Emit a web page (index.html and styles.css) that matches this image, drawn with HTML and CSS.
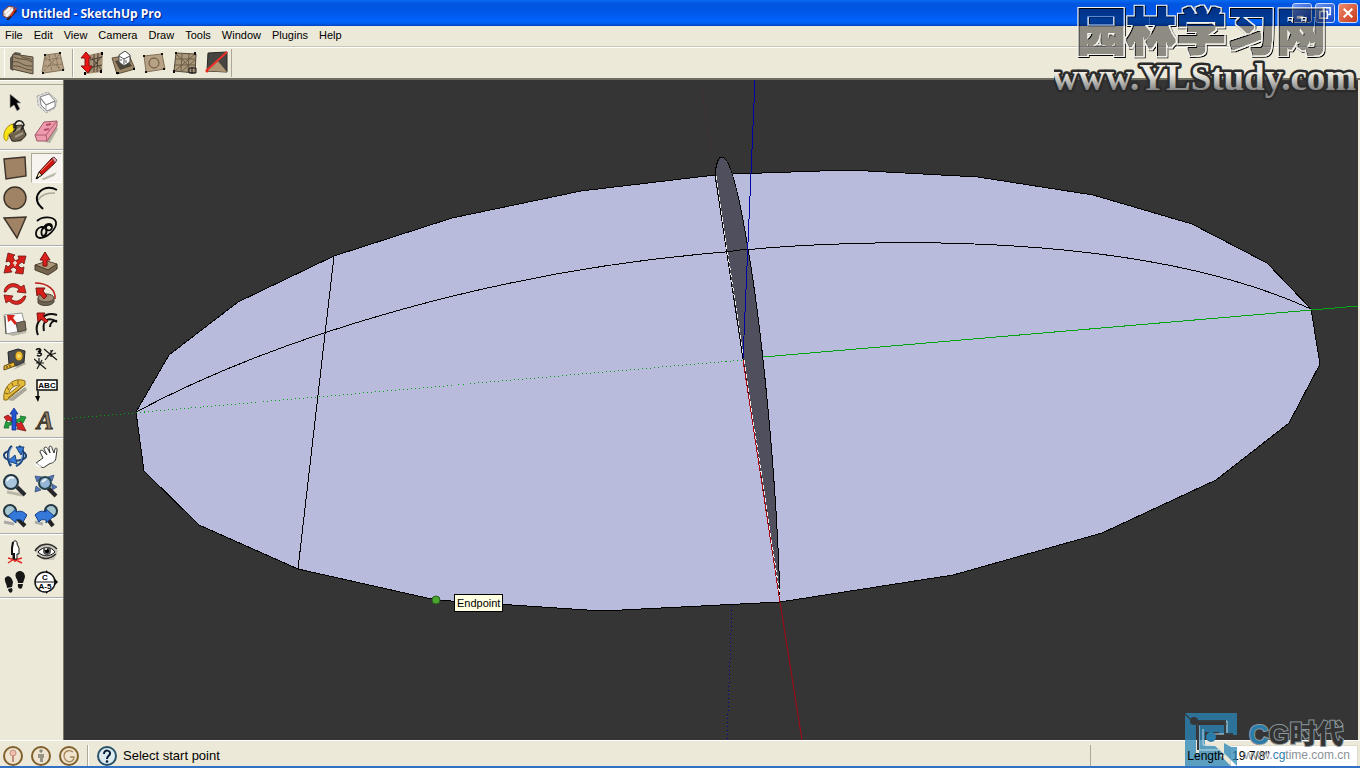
FILE: index.html
```
<!DOCTYPE html>
<html lang="en">
<head>
<meta charset="UTF-8">
<meta name="viewport" content="width=device-width, initial-scale=1.0">
<title>Untitled - SketchUp Pro</title>
<link rel="stylesheet" href="styles.css">
</head>
<body>
<header class="titlebar">
  <svg class="app-icon" viewBox="0 0 16 16"><path d="M4 15L14 4l1 2-8 9z" fill="#301818"/><path d="M1 6l6-5 5 1-1 7-6 4-4-2z" fill="#d9c8c4" stroke="#7b3b35"/><path d="M3 8l5-5M4 11l7-7" stroke="#fff" stroke-width="2"/><path d="M8 10L14 2l1 1-6 9z" fill="#d33b20"/></svg>
  <h1>Untitled - SketchUp Pro</h1>
  <div class="window-buttons">
    <button type="button" class="win-btn" aria-label="Minimize"><svg viewBox="0 0 19 19"><path d="M4 14h7" stroke="#fff" stroke-width="3"/></svg></button>
    <button type="button" class="win-btn" aria-label="Restore"><svg viewBox="0 0 19 19"><path d="M7 7V4h8v7h-3M4 8h8v7H4z" fill="none" stroke="#fff" stroke-width="1.5"/></svg></button>
    <button type="button" class="win-btn close" aria-label="Close"><svg viewBox="0 0 19 19"><path d="M5 5l9 9M14 5l-9 9" stroke="#fff" stroke-width="2.2"/></svg></button>
  </div>
</header>

<nav class="menubar">
  <button type="button">File</button>
  <button type="button">Edit</button>
  <button type="button">View</button>
  <button type="button">Camera</button>
  <button type="button">Draw</button>
  <button type="button">Tools</button>
  <button type="button">Window</button>
  <button type="button">Plugins</button>
  <button type="button">Help</button>
</nav>

<div class="toolbar">
  <div class="tool-row">
    <button type="button" class="tool" aria-label="From contours"><svg viewBox="0 0 24 24"><path d="M0 7l5-6 6 1-8 18-3-2z" fill="#5c5850"/><path d="M3 3l20 3v17L2 18z" fill="#a08c70" stroke="#4e463a"/><path d="M4 6c8 4 10 0 18 5M3 11c7-2 9 5 19 4M3 15c8-1 11 4 19 4M10 4c3 4 7 2 12 5" fill="none" stroke="#5b4f3d"/></svg></button>
    <button type="button" class="tool" aria-label="From scratch"><svg viewBox="0 0 24 24"><path d="M4 4l15-2 4 17-20 3-2-1z" fill="#b5a083" stroke="#87775f"/><path d="M8 4l3 17M14 3l4 16M3 9l17-2M3 15l19-2M4 6l16 12M3 20L19 3" fill="none" stroke="#84735a" stroke-dasharray="3 1"/><path d="M4 3v2M19 1v2M2 21v2M22 18v2" stroke="#111" stroke-width="2"/></svg></button>
  </div>
  <div class="tool-row">
    <button type="button" class="tool" aria-label="Smoove"><svg viewBox="0 0 24 24"><path d="M8 4l15-3-1 20-16 2z" fill="#a59074"/><path d="M14 3v18M18 2l-1 19M10 9l12-3M8 17l14-3M8 22L22 5M12 7l10 12" fill="none" stroke="#4c4235"/><path d="M6 1l5 6H9v8h3l-4 7-7-7h4V7H1z" fill="#ee1515" stroke="#851010"/><path d="M22 1v3M21 19v3M5 21v3" stroke="#000" stroke-width="2"/></svg></button>
    <button type="button" class="tool" aria-label="Stamp"><svg viewBox="0 0 24 24"><path d="M1 7l17-3 6 14-18 5z" fill="#9d8767" stroke="#5d4f3d"/><path d="M4 10l12-2 5 7-12 4z" fill="#4b4439"/><path d="M8 4l6-4 5 4v7l-6 4-5-4z" fill="#fff" stroke="#444"/><path d="M8 5l5 3 6-3M13 8v6M10 8v2M15 9v3" fill="none" stroke="#555"/><path d="M5 22h3M22 18h2" stroke="#000" stroke-width="2"/></svg></button>
    <button type="button" class="tool" aria-label="Drape"><svg viewBox="0 0 24 24"><path d="M2 5l18-2 3 15-19 3z" fill="#b6a184" stroke="#847258"/><circle cx="12" cy="12" r="5" fill="none" stroke="#655239"/><path d="M2 4v2M20 2v2M4 20v2M22 17v2" stroke="#111" stroke-width="2"/></svg></button>
    <button type="button" class="tool" aria-label="Add detail"><svg viewBox="0 0 24 24"><path d="M3 2l20 1-1 19-21-2z" fill="#ab987b" stroke="#51483a"/><path d="M9 3L8 20M16 3l-1 18M3 8h19M2 14h20M2 20L22 3M3 3l12 11M9 20L22 9" fill="none" stroke="#6a5c46"/><path d="M16 17h7v5h-7zM19 16v7" fill="none" stroke="#171717"/><path d="M3 1v2M22 1v3M1 19v3" stroke="#111" stroke-width="2"/></svg></button>
    <button type="button" class="tool" aria-label="Flip edge"><svg viewBox="0 0 24 24"><path d="M4 2l19-1v20L3 20z" fill="#474541" stroke="#282623"/><path d="M3 20L13 9l10 12z" fill="#ae9675"/><path d="M2 20L23 1" stroke="#ef3028" stroke-width="2"/><circle cx="3" cy="20" r="1.5" fill="#ed2a1d"/></svg></button>
  </div>
</div>

<main class="workspace">
  <aside class="sidebar">
    <div class="grip"></div>
    <div class="tool-group">
      <button type="button" class="tool" aria-label="Select"><svg viewBox="0 0 24 24"><path d="M7 4v14l4-3 3 6 3-2-3-6h4z" fill="#050505" stroke="#aaa" stroke-width=".7"/></svg></button>
      <button type="button" class="tool" aria-label="Make component"><svg viewBox="0 0 24 24"><path d="M3 6l11-4 9 8-2 8-9 5-8-8z" fill="#ddd" stroke="#aaa" stroke-dasharray="3 1"/><path d="M6 7l9-3 6 7-9 4zM6 8l1 7 6 6 8-4v-6l-9 4z" fill="#fff" stroke="#888"/><path d="M12 15v5" stroke="#aaa"/></svg></button>
      <button type="button" class="tool" aria-label="Paint bucket"><svg viewBox="0 0 24 24"><path d="M10 20l8 2 6-8-4-4z" fill="#aaa58e"/><path d="M7 6l12-1 4 10c-3 5-8 7-14 6L6 15z" fill="#6e624d" stroke="#242019"/><path d="M10 12l8-4M12 17l8-4" stroke="#a69c86" stroke-width="2"/><path d="M10 4C4 5 0 12 1 18c1 4 4 3 4 0 0-5 3-5 6-7z" fill="#f9e316" stroke="#aa9315"/><path d="M10 4c4 1 4 6 0 8" fill="none" stroke="#222" stroke-width="1.5"/><path d="M11 8C12-1 19-1 21 5l-3 5" fill="none" stroke="#222" stroke-width="1.6"/></svg></button>
      <button type="button" class="tool" aria-label="Eraser"><svg viewBox="0 0 24 24"><path d="M11 22l5 1 8-14-2-3z" fill="#b5b1a1"/><path d="M10 2l13-1v5L13 21H3l-2-6z" fill="#ee9bae" stroke="#9b5b69"/><path d="M1 15h11L23 1M12 15l1 6" fill="none" stroke="#ab596b"/><path d="M12 5l5-1M10 10l5-1" stroke="#b74c68" stroke-width="2"/></svg></button>
    </div>
    <div class="tool-group">
      <button type="button" class="tool" aria-label="Rectangle"><svg viewBox="0 0 24 24"><path d="M1 3l21-2 1 19-20 3z" fill="#a08365" stroke="#3b3128" stroke-width="1.4"/></svg></button>
      <button type="button" class="tool active" aria-label="Line"><svg viewBox="0 0 24 24"><path d="M7 23l16-7-3 4-10 4z" fill="#bab7ab"/><path d="M18 2l4 4L8 19l-5 3 2-6z" fill="#d01812" stroke="#50120f"/><path d="M7 15L18 4" stroke="#fa7568"/><path d="M18 2l2-1 3 3-2 3z" fill="#ec9eaf" stroke="#6a4b4c"/><path d="M5 16l3 3-6 4z" fill="#eed5a8" stroke="#222"/><path d="M2 23l1-3 2 2z"/></svg></button>
      <button type="button" class="tool" aria-label="Circle"><svg viewBox="0 0 24 24"><circle cx="12" cy="12" r="11" fill="#a08365" stroke="#3b3128" stroke-width="1.4"/></svg></button>
      <button type="button" class="tool" aria-label="Arc"><svg viewBox="0 0 24 24"><path d="M4 14c4-6 9-7 17-7" fill="none" stroke="#aaa69a" stroke-width="1.5"/><path d="M23 4C14-1 5 3 3 11c-1 6 3 9 6 12" fill="none" stroke="#070707" stroke-width="2"/></svg></button>
      <button type="button" class="tool" aria-label="Polygon"><svg viewBox="0 0 24 24"><path d="M1 2l22-1-9 21z" fill="#a08365" stroke="#3b3128" stroke-width="1.4"/></svg></button>
      <button type="button" class="tool" aria-label="Freehand"><svg viewBox="0 0 24 24"><path d="M3 5C8 0 20 0 22 6c1 7-9 16-16 16-6-1-5-9 1-11 5-1 7 5 4 8-4 3-5-4-1-8 3-4 8-4 8 0 0 5-7 4-6 0 1-3 5-3 5 0" fill="none" stroke="#080808" stroke-width="1.8"/></svg></button>
    </div>
    <div class="tool-group">
      <button type="button" class="tool" aria-label="Move"><svg viewBox="0 0 24 24"><path d="M5 1l7 2-2 2 2 4 4-2-1-3 8 0-2 8-2-2-4 3 3 3 3-1-1 7-8-1 2-3-3-3-4 2 2 3-8 1 2-8 2 2 3-3-2-3-3 1z" fill="#d71f1a" stroke="#681715" stroke-width=".8"/><path d="M10 11h4M12 9v5" stroke="#ece9d8" stroke-width="1.5"/></svg></button>
      <button type="button" class="tool" aria-label="Push pull"><svg viewBox="0 0 24 24"><path d="M15 24l9-8v-3l-2 4z" fill="#aaa392"/><path d="M1 13l12-4 10 3-9 6z" fill="#ad9778" stroke="#5b4e3c"/><path d="M1 13l13 5 9-6v5l-9 6-13-5z" fill="#75654e" stroke="#473c2f"/><path d="M11 0l5 8h-3v6H9V8H6z" fill="#df211d" stroke="#74110f"/></svg></button>
      <button type="button" class="tool" aria-label="Rotate"><svg viewBox="0 0 24 24"><path d="M1 10C2 1 12-1 18 5l3-2 2 8-9-1 2-3C10 3 6 5 3 10z" fill="#dd2420" stroke="#731512" stroke-width=".8"/><path d="M23 14c-2 9-11 11-17 5l-3 2-2-8 9 1-2 3c5 4 9 2 13-3z" fill="#dd2420" stroke="#731512" stroke-width=".8"/></svg></button>
      <button type="button" class="tool" aria-label="Follow me"><svg viewBox="0 0 24 24"><path d="M4 16v5c4 4 14 3 16-1v-4z" fill="#6d6352" stroke="#4b4338"/><ellipse cx="12" cy="16" rx="8" ry="4" fill="#9e8c72" stroke="#4a4339"/><path d="M1 1c13 0 21 7 20 16" fill="none" stroke="#b81e18" stroke-width="1.5"/><path d="M2 6l9 0-2 3 4 5-3 3-4-5-3 2z" fill="#d91e1a" stroke="#751512"/></svg></button>
      <button type="button" class="tool" aria-label="Scale"><svg viewBox="0 0 24 24"><path d="M4 22l6 2 13-3 1-5z" fill="#b9b5a7"/><path d="M1 3l18-2 4 17-20 4z" fill="#fafafa" stroke="#999"/><path d="M2 4l1 18M13 11l9-2 1 9-8 2z" fill="#776b59" stroke="#4d483e"/><path d="M4 3l8 0-2 3 4 5-2 2-4-5-3 2z" fill="#d8221a"/></svg></button>
      <button type="button" class="tool" aria-label="Offset"><svg viewBox="0 0 24 24"><path d="M4 23C-1 11 10-1 23 3M10 19C8 9 14 4 23 10M16 15c0-4 3-7 7-6" fill="none" stroke="#111" stroke-width="2"/><path d="M3 1l8 0-2 3 5 5-2 2-5-4-3 3z" fill="#d9201b" stroke="#7c1511"/></svg></button>
    </div>
    <div class="tool-group">
      <button type="button" class="tool" aria-label="Tape measure"><svg viewBox="0 0 24 24"><path d="M10 22l13-6-2-3z" fill="#aaa799"/><path d="M5 4l10-3 7 2-1 11-8 4-7-2z" fill="#4b4d50" stroke="#242628"/><ellipse cx="16" cy="8" rx="4" ry="5" fill="#ecb52b" stroke="#59512a"/><circle cx="16" cy="8" r="2" fill="#f7dd69"/><path d="M11 14L1 18v4l11-4z" fill="#e9b62e" stroke="#5e4b19"/><path d="M4 18v2M7 17v2" stroke="#352c15"/></svg></button>
      <button type="button" class="tool" aria-label="Dimension"><svg viewBox="0 0 24 24"><path d="M11 12L19 2M0 11l12 10M10 1l13 11M8 12l-5 9M22 5l-9 3M5 10v8M17 2v7M2 15h8" fill="none" stroke="#171717" stroke-width="1.2"/><path d="M2 2c3-3 7 0 3 3 5 0 1 5-2 2M7 1l-3 3" fill="none" stroke="#111" stroke-width="1.5"/></svg></button>
      <button type="button" class="tool" aria-label="Protractor"><svg viewBox="0 0 24 24"><path d="M5 22l17-13 2 3-14 11z" fill="#aaa798"/><path d="M1 22C-1 9 11-2 22 3v4L4 22z" fill="#e6bd38" stroke="#8d6917"/><path d="M6 16c0-5 5-9 11-9z" fill="#ece9d8" stroke="#95732a"/><path d="M2 15l3 1M4 9l2 3M9 5l1 3M15 2v4M5 20l15-12" stroke="#7f611d"/></svg></button>
      <button type="button" class="tool" aria-label="Text label"><svg viewBox="0 0 24 24"><path d="M3 2h20v10H3zM4 13v8" fill="#fff" stroke="#080808" stroke-width="1.5"/><path d="M1 18l3 6 2-6z"/><text x="13" y="10" text-anchor="middle" class="icon-text">ABC</text></svg></button>
      <button type="button" class="tool" aria-label="Axes"><svg viewBox="0 0 24 24"><path d="M1 9l4-2 11 9 2-3 5 10-9-2 1-2-9-7-2 1z" fill="#d42525" stroke="#721719" stroke-width=".8"/><path d="M1 20l2-7 2 2 13-5-1-2 6 1-3 6-2-2-13 5 1 2z" fill="#24a23b" stroke="#13682a" stroke-width=".8"/><path d="M11 0l4 6h-2v16H9V6H7z" fill="#2354d2" stroke="#14308b" stroke-width=".8"/></svg></button>
      <button type="button" class="tool" aria-label="3D text"><svg viewBox="0 0 24 24"><text x="11" y="21" text-anchor="middle" class="icon-a">A</text></svg></button>
    </div>
    <div class="tool-group">
      <button type="button" class="tool" aria-label="Orbit"><svg viewBox="0 0 24 24"><path d="M7 7c-9 1-7 8 0 9 8 2 17-1 16-5-1-3-4-4-8-4" fill="none" stroke="#1d4175" stroke-width="2"/><path d="M8 22C4 16 4 6 9 2M16 2c6 4 6 16-3 20" fill="none" stroke="#1d4175" stroke-width="2.4"/><path d="M8 20C5 15 5 7 9 3M17 4c4 5 3 14-4 17" fill="none" stroke="#70a7e9"/><path d="M13 3l8 0-3 8zM5 17l7-6 2 9z" fill="#397bd6" stroke="#18447d"/></svg></button>
      <button type="button" class="tool" aria-label="Pan"><svg viewBox="0 0 24 24"><path d="M2 19l7-5-3-6c0-3 3-2 5 1l2 2-3-6c0-3 3-2 4 0l2 4-1-5c0-3 3-2 3 0l2 5 1-4c1-2 2-1 2 1l-1 7c0 5-4 6-7 7l-6 4z" fill="#fff" stroke="#343434"/><path d="M2 19l-1 3 7 1z" fill="#fff"/></svg></button>
      <button type="button" class="tool" aria-label="Zoom"><svg viewBox="0 0 24 24"><path d="M4 18l15 3" stroke="#bbb8aa" stroke-width="3"/><path d="M14 13l8 8" stroke="#252a2e" stroke-width="4"/><circle cx="8" cy="8" r="7" fill="#a9c6dc" stroke="#243642" stroke-width="2"/><path d="M4 7c2-4 5-4 7-3" stroke="#fff" fill="none" stroke-width="1.5"/></svg></button>
      <button type="button" class="tool" aria-label="Zoom extents"><svg viewBox="0 0 24 24"><path d="M1 2l7 1-5 5zM20 1l-6 2 4 4zM1 18l1-6 5 4zM23 13l-5-3 0 6z" fill="#5274b4" stroke="#395383" stroke-width=".8"/><path d="M14 14l8 8" stroke="#29262b" stroke-width="4"/><circle cx="11" cy="9" r="6" fill="#94b5d4" stroke="#26434e" stroke-width="2"/><path d="M8 8l4-3" stroke="#eee" stroke-width="2"/></svg></button>
      <button type="button" class="tool" aria-label="Previous view"><svg viewBox="0 0 24 24"><path d="M1 18l10 2" stroke="#aaa" stroke-width="3"/><path d="M14 14l8 8" stroke="#222" stroke-width="4"/><circle cx="7" cy="7" r="6" fill="#a5c6cf" stroke="#263740" stroke-width="2"/><path d="M5 12l8-7v3c5-2 8 0 11 3l-4 7c-1-2-3-3-7-2v3z" fill="#3478da" stroke="#153e82"/></svg></button>
      <button type="button" class="tool" aria-label="Next view"><svg viewBox="0 0 24 24"><path d="M1 18l8 2" stroke="#aaa" stroke-width="3"/><path d="M13 14l6 8" stroke="#222" stroke-width="4"/><circle cx="17" cy="7" r="6" fill="#a5c6cf" stroke="#263740" stroke-width="2"/><path d="M20 12l-8-7v3C7 6 4 8 1 11l4 7c1-2 3-3 7-2v3z" fill="#3478da" stroke="#153e82"/></svg></button>
    </div>
    <div class="tool-group">
      <button type="button" class="tool" aria-label="Position camera"><svg viewBox="0 0 24 24"><path d="M5 23l6-4 8 4M5 18l7 2 7-2M12 17v5" fill="none" stroke="#e22922" stroke-width="1.5"/><path d="M10 3c0-3 5-3 4 1l2 4v6h-2v5h-4v-5H9V8z" fill="#fff" stroke="#111"/><path d="M10 2L9 8v6h2v5" fill="none" stroke="#111" stroke-width="2"/></svg></button>
      <button type="button" class="tool" aria-label="Look around"><svg viewBox="0 0 24 24"><path d="M1 11l5-7 12 0 6 7-4 9-11 0z" fill="#c9c5ba"/><path d="M1 11C6 3 16 2 23 9M3 15c6 5 13 4 19-1" fill="none" stroke="#303030" stroke-width="1.6"/><path d="M4 12c5-6 13-6 17 0-5 5-12 5-17 0z" fill="#fff" stroke="#111"/><circle cx="13" cy="11" r="4" fill="#525252"/><circle cx="13" cy="11" r="2"/><circle cx="12" cy="9" r="1" fill="#fff"/></svg></button>
      <button type="button" class="tool" aria-label="Walk"><svg viewBox="0 0 24 24"><path d="M13 3c3-4 9-2 9 4l-2 6h-5c0-4-4-6-2-10zM15 14l5 0-1 4c-2 2-5 0-4-4zM2 8c3-4 7-1 8 4l-1 5-5 1C4 14 1 12 2 8zM5 19l4-1c2 5-3 7-4 1z" fill="#171717"/></svg></button>
      <button type="button" class="tool" aria-label="Section plane"><svg viewBox="0 0 24 24"><path d="M12 0l12 12-12 12z"/><circle cx="11" cy="12" r="10" fill="#fff" stroke="#111" stroke-width="1.5"/><path d="M1 12h21" stroke="#111"/><text x="11" y="10" text-anchor="middle" class="icon-text">C</text><text x="11" y="19" text-anchor="middle" class="icon-text">A-5</text></svg></button>
    </div>
  </aside>

  <section class="viewport">
    <svg class="model" viewBox="64 80 1294 660" preserveAspectRatio="xMinYMin slice">
      <!-- disc -->
      <path class="face" d="M136 412L169 355 238 302 334 256 452 218 581 191 715 175 733 174 849 170 978 177 1093 195 1192 224 1267 263 1311 309 1320 364 1289 423 1216 480 1102 533 953 575 780 602 602 611 436 600 298 569 199 525 144 471z"/>
      <path class="edge" d="M334 256L298 569"/>
      <path class="edge" d="M136 412C280 335 500 270 725 252C810 242 1120 222 1311 309"/>
      <!-- upright blade -->
      <path class="blade" d="M715 175C716 163 719 157 722 157C728 157 736 175 748 249C762 330 777 480 780 602z"/>
      <path class="edge" d="M725 252L748 249"/>
      <!-- axes -->
      <path class="axis red" d="M743 360L780 602"/>
      <path class="axis red smooth" d="M780 602L802 740"/>
      <path class="hidden-edge" d="M716 176L743 354M744 360L780 596"/>
      <path class="axis red dotted faint" d="M702 90L715 175"/>
      <path class="axis green" d="M763 357L1358 306"/>
      <path class="axis green dotted" d="M64 419L743 360"/>
      <path class="axis blue" d="M755 80L743 359"/>
      <path class="axis blue dotted" d="M732 606L727 740"/>
      <circle cx="436" cy="600" r="4" fill="#4aa52d" stroke="#285f1c"/>
    </svg>
    <div class="tooltip">Endpoint</div>
  </section>
</main>

<footer class="statusbar">
  <button type="button" class="status-icon" aria-label="Geo-location"><svg viewBox="0 0 20 20"><circle cx="10" cy="10" r="9" fill="#eee4cf" stroke="#80602b" stroke-width="2"/><circle cx="10" cy="7" r="3" fill="#efc0b0" stroke="#c58f7c"/><path d="M10 10v6" stroke="#bd8d7a" stroke-width="2"/></svg></button>
  <button type="button" class="status-icon" aria-label="Claim credit"><svg viewBox="0 0 20 20"><circle cx="10" cy="10" r="9" fill="#eee4cf" stroke="#80602b" stroke-width="2"/><circle cx="10" cy="5" r="1.7" fill="#8a8879"/><path d="M7 8h6v4h-1v4H9v-4H7z" fill="#969485"/></svg></button>
  <button type="button" class="status-icon" aria-label="Credits"><svg viewBox="0 0 20 20"><circle cx="10" cy="10" r="9" fill="#eee4cf" stroke="#80602b" stroke-width="2"/><path d="M14 6c-8-5-12 5-6 9 3 2 7 0 7-4h-4" fill="none" stroke="#a78657" stroke-width="1.4"/></svg></button>
  <span class="divider"></span>
  <button type="button" class="status-icon" aria-label="Help"><svg viewBox="0 0 20 20"><circle cx="10" cy="10" r="9" fill="#ddebef" stroke="#285269" stroke-width="2"/><path d="M7 8c0-5 7-4 6 0-1 2-3 2-3 5" fill="none" stroke="#071d37" stroke-width="2"/><circle cx="10" cy="15.5" r="1.3" fill="#071d37"/></svg></button>
  <span class="hint">Select start point</span>
  <div class="measure">
    <label for="length">Length</label>
    <input type="text" id="length" value="19 7/8&quot;">
  </div>
</footer>

<svg class="mark-top" viewBox="0 0 304 102" aria-hidden="true">
  <defs>
    <linearGradient id="silver" x1="0" y1="0" x2="0" y2="1"><stop offset=".4" stop-color="#eeece2"/><stop offset=".8" stop-color="#888"/></linearGradient>
    <!-- translucent letters with a light rim -->
    <filter id="rim" x="-5%" y="-10%" width="110%" height="120%">
      <feMorphology in="SourceAlpha" operator="dilate" radius="1" result="inner"/>
      <feMorphology in="SourceAlpha" operator="dilate" radius="2" result="outer"/>
      <feComposite in="outer" in2="inner" operator="out" result="ring"/>
      <feFlood flood-color="#f4f3ee"/>
      <feComposite in2="ring" operator="in" result="light"/>
      <feOffset in="ring" dx="1" dy="1" result="shade"/>
      <feFlood flood-color="#000" flood-opacity=".4"/>
      <feComposite in2="inner" operator="in" result="body"/>
      <feMerge><feMergeNode in="shade"/><feMergeNode in="body"/><feMergeNode in="light"/></feMerge>
    </filter>
  </defs>
  <text x="22" y="50" class="mark-cn" filter="url(#rim)">园林学习网</text>
  <text x="150" y="90" text-anchor="middle" class="mark-url">www.YLStudy.com</text>
</svg>

<svg class="mark-bottom" viewBox="0 0 174 54" aria-hidden="true">
  <g opacity=".75">
    <path d="M0 0h52v22H42V9H9L0 0zM0 2l11 10v28h22l13 13H0zM46 34h6v19L39 40V30z" fill="#2b87b9"/>
    <path d="M14 12h28v9h-8v-2H20v14h10l10 9H14z" fill="#2b87b9"/>
  </g>
  <path d="M9 8l5 5v24h20M9 8h33v13H27M18 16v16h8" fill="none" stroke="#c1dce5"/>
  <path d="M9 8h31v13h8M9 8l4 5v24" fill="none" stroke="#353b3e" stroke-width="2"/>
  <circle cx="9" cy="8" r="4" fill="#35373a"/><circle cx="26" cy="24" r="5" fill="#2b7da9"/>
  <text x="64" y="31" class="mark-cg"><tspan class="mark-c">C</tspan>G时代</text>
  <text x="59" y="46" class="mark-site">www.<tspan class="mark-c">cg</tspan>time.com.cn</text>
</svg>
</body>
</html>
```

FILE: styles.css
```
* {
  box-sizing: border-box;
}

body {
  font-family: "Liberation Sans", Arial, sans-serif;
  font-size: 11px;
  margin: 0;
  height: 100vh;
  display: flex;
  flex-direction: column;
  background-color: #ece9d8;
  border-bottom: 2px solid #3272c4;
  color: #000;
  position: relative;
  overflow: hidden;
}

button {
  font: inherit;
  color: inherit;
  background: none;
  border: none;
  padding: 0;
}

svg {
  display: block;
}

.titlebar {
  display: flex;
  align-items: center;
  height: 26px;
  padding: 0 2px;
  background: linear-gradient(#0a6bf0 0, #0054df 4px, #0057e8 12px, #0063fb 20px, #0060f2 23px, #0043c0);
  color: #fff;
}

.titlebar h1 {
  margin: 0 0 0 3px;
  flex: 1;
  font-family: "Open Sans", "Trebuchet MS", sans-serif;
  font-size: 12px;
  font-weight: bold;
  text-shadow: 1px 1px 1px #0a1883;
}

.app-icon {
  width: 16px;
  height: 16px;
}

.window-buttons {
  display: flex;
  gap: 3px;
}

.win-btn {
  width: 20px;
  height: 20px;
  background: linear-gradient(135deg, #6a96f3, #1646c2);
  border: 1px solid #cad9f9;
  border-radius: 3px;
}

.win-btn.close {
  background: linear-gradient(135deg, #ed8b6b, #c6391a);
}

.menubar {
  display: flex;
  align-items: center;
  gap: 11px;
  height: 21px;
  padding: 0 5px 2px;
  border-bottom: 1px solid #c9c6b6;
}

.toolbar {
  display: flex;
  height: 33px;
  padding: 1px 0 1px 4px;
  border-top: 1px solid #fff;
  border-bottom: 2px solid #6f6c62;
}

.tool-row {
  display: flex;
  align-items: center;
  padding: 0 4px 0 1px;
  border-left: 1px solid #fff;
  border-right: 1px solid #aca899;
}

.tool-row + .tool-row {
  padding: 0 0 0 2px;
}

.tool {
  display: grid;
  place-items: center;
  width: 31px;
  height: 30px;
}

.tool svg {
  width: 24px;
  height: 24px;
}

.tool.active {
  background-color: #f7f4ef;
  border: 1px solid #fff;
  border-top-color: #aca899;
  border-left-color: #aca899;
}

.workspace {
  display: flex;
  flex: 1;
  min-height: 0;
}

.sidebar {
  width: 64px;
  border-right: 1px solid #77746a;
}

.grip {
  height: 5px;
  border-top: 1px solid #fff;
  border-bottom: 1px solid #aca899;
}

.tool-group {
  display: grid;
  grid-template-columns: 31px 31px;
  padding: 2px 0;
  border-bottom: 2px groove #fff;
}

.tool-group .tool {
  padding-right: 2px;
}

.tool-group:last-child {
  padding-bottom: 0;
}

.icon-text {
  font: bold 8px "Liberation Sans", sans-serif;
}

.icon-a {
  font: italic bold 25px "Liberation Serif", serif;
  fill: #8f8068;
  stroke: #302a22;
}

.viewport {
  position: relative;
  flex: 1;
  margin-right: 2px;
  background-color: #353535;
  overflow: hidden;
}

.model {
  width: 100%;
  height: 100%;
}

.face {
  fill: #b8bbdb;
  stroke: #000;
  shape-rendering: crispEdges;
}

.edge {
  fill: none;
  stroke: #000;
  shape-rendering: crispEdges;
}

.blade {
  fill: #4f4f5e;
  stroke: #000;
  shape-rendering: crispEdges;
}

.hidden-edge {
  fill: none;
  stroke: #eee;
  stroke-dasharray: 4 3;
  shape-rendering: crispEdges;
}

.axis {
  fill: none;
  shape-rendering: crispEdges;
}

.smooth {
  shape-rendering: auto;
}

.red {
  stroke: #a90814;
}

.green {
  stroke: #00a510;
}

.blue {
  stroke: #0000a5;
}

.dotted {
  stroke-dasharray: 1 3;
}

.faint {
  opacity: 0.3;
}

.tooltip {
  position: absolute;
  left: 390px;
  top: 514px;
  padding: 1px 2px;
  line-height: 14px;
  background-color: #ffffe1;
  border: 1px solid #000;
}

.statusbar {
  display: flex;
  align-items: center;
  height: 26px;
  padding: 4px 0 0 3px;
  gap: 8px;
  border-top: 1px solid #fff;
  font-size: 12px;
}

.status-icon {
  width: 20px;
  height: 20px;
}

.divider {
  width: 2px;
  height: 22px;
  border-left: 1px solid #aca899;
  border-right: 1px solid #fff;
}

.hint {
  margin-left: -2px;
  flex: 1;
  font-size: 13px;
}

.measure {
  display: flex;
  align-items: center;
  justify-content: flex-end;
  gap: 6px;
  width: 270px;
  height: 22px;
  padding-right: 2px;
  border-left: 1px solid #aca899;
}

.measure label {
  position: relative;
  z-index: 1;
}

.measure input {
  width: 128px;
  height: 22px;
  padding: 0 1px;
  font: inherit;
  background-color: #fff;
  border: 1px solid #dedbca;
}

/* overlaid marks */
.mark-top {
  position: absolute;
  top: 0;
  right: 2px;
  width: 304px;
  height: 102px;
  pointer-events: none;
}

.mark-cn {
  font: 900 50px "Noto Sans CJK SC", sans-serif;
}

.mark-url {
  font: bold 37px "Liberation Serif", serif;
  fill: url(#silver);
  stroke: #2b2b2b;
  stroke-width: 5px;
  stroke-linejoin: round;
  paint-order: stroke;
}

.mark-bottom {
  position: absolute;
  right: 1px;
  bottom: -1px;
  width: 174px;
  height: 54px;
  pointer-events: none;
}

.mark-cg {
  font: 900 27px "Liberation Sans", "Noto Sans CJK SC", sans-serif;
  fill: #333;
  stroke: #8b989d;
  stroke-width: 2px;
  paint-order: stroke;
}

.mark-site {
  font: 12px "Liberation Sans", sans-serif;
  fill: #8c9298;
}

.mark-c {
  fill: #2b7da9;
}
```
